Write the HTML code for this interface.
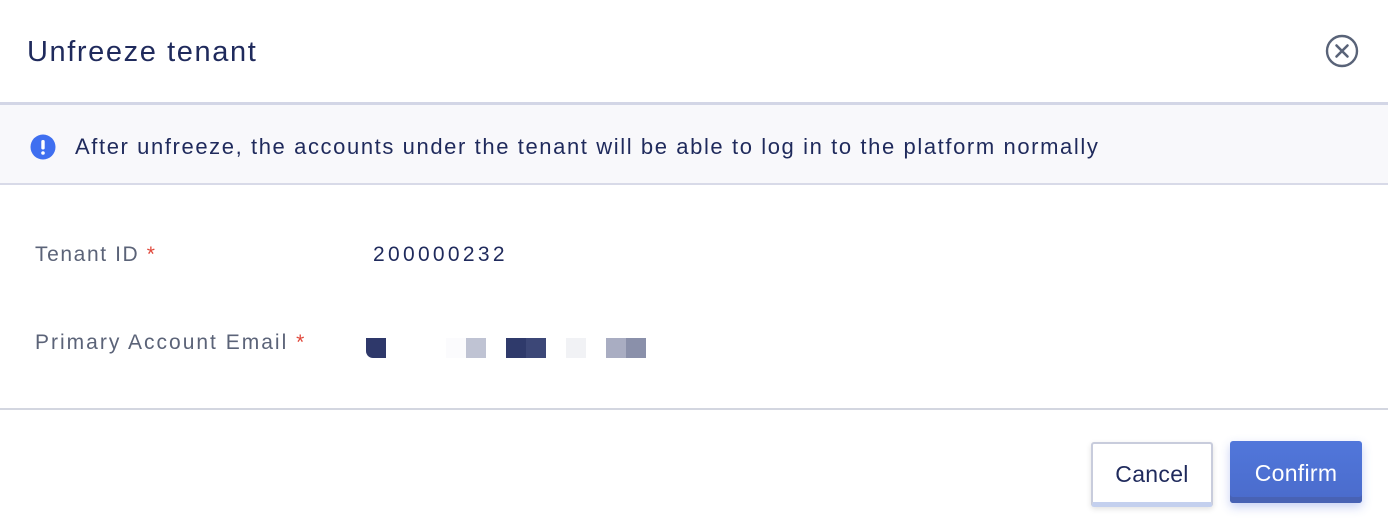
<!DOCTYPE html>
<html><head><style>
body{margin:0;width:1388px;height:530px;background:#fff;font-family:"Liberation Sans",sans-serif;position:relative;overflow:hidden}
.a{position:absolute;white-space:nowrap}
</style></head><body>
<div class="a" style="left:27px;top:36px;font-size:29px;color:#1f2a5c;letter-spacing:1.6px">Unfreeze tenant</div>
<svg class="a" style="left:1324px;top:33px" width="36" height="36" viewBox="0 0 36 36"><circle cx="18" cy="18" r="15" fill="none" stroke="#596378" stroke-width="2.4"/><path d="M12.5 12.5L23.5 23.5M23.5 12.5L12.5 23.5" stroke="#596378" stroke-width="2.6" stroke-linecap="round"/></svg>
<div class="a" style="left:0;top:102px;width:1388px;height:3px;background:#d3d6e6"></div>
<div class="a" style="left:0;top:105px;width:1388px;height:78px;background:#f8f8fb;border-bottom:2px solid #d8dae8"></div>
<svg class="a" style="left:30px;top:134px" width="26" height="26" viewBox="0 0 26 26"><circle cx="13" cy="13" r="12.5" fill="#3f6ff0"/><rect x="11.3" y="6" width="3.4" height="9.5" rx="1.5" fill="#fff"/><circle cx="13" cy="19" r="1.8" fill="#fff"/></svg>
<div class="a" style="left:75px;top:134px;font-size:22px;color:#1f2a5c;letter-spacing:1.6px">After unfreeze, the accounts under the tenant will be able to log in to the platform normally</div>
<div class="a" style="left:35px;top:243px;font-size:21px;color:#5b6378;letter-spacing:1.6px">Tenant ID <span style="color:#e0483b">*</span></div>
<div class="a" style="left:373px;top:243px;font-size:21px;color:#1f2a5c;letter-spacing:3.3px">200000232</div>
<div class="a" style="left:35px;top:331px;font-size:21px;color:#5b6378;letter-spacing:2px">Primary Account Email <span style="color:#e0483b">*</span></div>
<div class="a" style="left:366px;top:338px;width:20px;height:20px;background:#2e386a;border-radius:0 0 0 7px"></div>
<div class="a" style="left:446px;top:338px;width:20px;height:20px;background:#fbfbfd"></div>
<div class="a" style="left:466px;top:338px;width:20px;height:20px;background:#bfc3d3"></div>
<div class="a" style="left:506px;top:338px;width:20px;height:20px;background:#2f3a6b"></div>
<div class="a" style="left:526px;top:338px;width:20px;height:20px;background:#3c4777"></div>
<div class="a" style="left:566px;top:338px;width:20px;height:20px;background:#f1f2f5"></div>
<div class="a" style="left:606px;top:338px;width:20px;height:20px;background:#a9adc2"></div>
<div class="a" style="left:626px;top:338px;width:20px;height:20px;background:#8a90aa"></div>
<div class="a" style="left:0;top:408px;width:1388px;height:2px;background:#d3d6e0"></div>
<div class="a" style="left:1091px;top:442px;width:118px;height:58px;border:2px solid #c8ccdc;border-bottom:5px solid #c4d0ee;border-radius:3px;background:#fff;box-shadow:0 2px 6px rgba(0,0,0,.12);text-align:center;line-height:60px;font-size:23px;color:#1f2a5c;letter-spacing:0.3px">Cancel</div>
<div class="a" style="left:1230px;top:441px;width:132px;height:62px;border-radius:3px;background:linear-gradient(#5177db,#4a6bcb);box-shadow:0 4px 10px rgba(70,100,220,.3),inset 0 -6px 0 #4862b4;text-align:center;line-height:64px;font-size:23px;color:#fff;letter-spacing:0.3px">Confirm</div>
</body></html>
